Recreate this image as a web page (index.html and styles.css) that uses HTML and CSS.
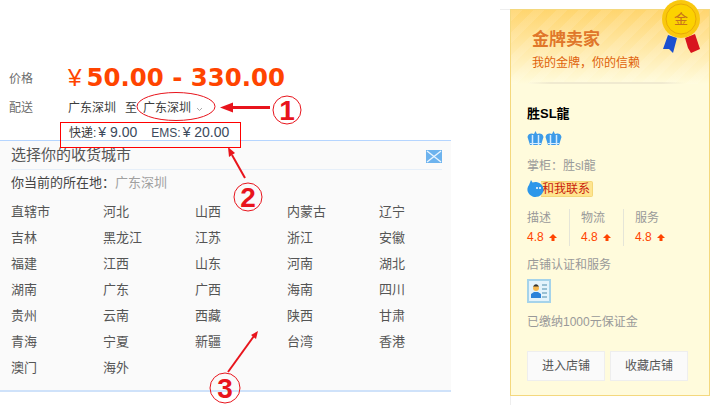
FILE: index.html
```html
<!DOCTYPE html>
<html lang="zh-CN">
<head>
    <meta charset="UTF-8">
    <title>选择你的收货城市</title>
    <link rel="stylesheet" href="styles.css">
</head>
<body>
    <div class="page">
        <div class="main">
            <div class="row price-row">
                <div class="label">价格</div>
                <div class="price"><span class="yen">¥</span>50.00 - 330.00</div>
            </div>
            <div class="row ship-row">
                <div class="label">配送</div>
                <div class="ship-to">广东深圳<span class="to">至</span>广东深圳<svg class="caret" width="7" height="5" viewBox="0 0 7 5"><path d="M1 1l2.500 2.500L6 1" fill="none" stroke="#aaa"/></svg></div>
            </div>
            <div class="fee">快递:<span class="fee-num">¥ 9.00</span><span class="fee-ems">EMS:</span><span class="fee-num">¥ 20.00</span></div>

            <div class="city-box">
                <div class="city-head">
                    <span>选择你的收货城市</span>
                    <svg class="close" width="16" height="13" viewBox="0 0 16 13"><rect width="16" height="13" fill="#6db3ee"/><path d="M1 1l14 11M15 1L1 12" stroke="#e8f4ff" stroke-width="1.400"/></svg>
                </div>
                <div class="city-now">你当前的所在地：<span>广东深圳</span></div>
                <div class="city-grid">
                    <a>直辖市</a><a>河北</a><a>山西</a><a>内蒙古</a><a>辽宁</a>
                    <a>吉林</a><a>黑龙江</a><a>江苏</a><a>浙江</a><a>安徽</a>
                    <a>福建</a><a>江西</a><a>山东</a><a>河南</a><a>湖北</a>
                    <a>湖南</a><a>广东</a><a>广西</a><a>海南</a><a>四川</a>
                    <a>贵州</a><a>云南</a><a>西藏</a><a>陕西</a><a>甘肃</a>
                    <a>青海</a><a>宁夏</a><a>新疆</a><a>台湾</a><a>香港</a>
                    <a>澳门</a><a>海外</a>
                </div>
            </div>
        </div>

        <div class="side-col">
            <div class="side">
                <div class="gold">
                    <div class="gold-title">金牌卖家</div>
                    <div class="gold-sub">我的金牌，你的信赖</div>
                    <div class="gold-line"></div>
                </div>
                <div class="shop">
                    <div class="shop-name">胜SL龍</div>
                    <div class="crowns">
                        <svg width="17" height="15" viewBox="0 0 17 15"><path d="M8.500 0l1.500 3c2-1 6-1 6.500 3L14 14H3L.5 6C1 2 5 2 7 3z" fill="#3d9be8"/><path d="M5.500 4v10M11.500 4v10" stroke="#d5ecff" stroke-width="1.500"/><path d="M3 12.500h11" stroke="#d5ecff"/></svg>
                        <svg width="17" height="15" viewBox="0 0 17 15"><path d="M8.500 0l1.500 3c2-1 6-1 6.500 3L14 14H3L.5 6C1 2 5 2 7 3z" fill="#3d9be8"/><path d="M5.500 4v10M11.500 4v10" stroke="#d5ecff" stroke-width="1.500"/><path d="M3 12.500h11" stroke="#d5ecff"/></svg>
                    </div>
                    <div class="keeper">掌柜：胜sl龍</div>
                    <div class="contact">
                        <svg class="wang" width="17" height="17" viewBox="0 0 17 17"><path d="M4 0l1.500 2.500A8 7.500 0 1 1 2 5z" fill="#2d97ea"/><circle cx="10" cy="8" r="1" fill="#fff"/><circle cx="13" cy="8" r="1" fill="#fff"/></svg>
                        <span>和我联系</span>
                    </div>
                    <div class="rates">
                        <div class="rate">描述<b>4.8<svg class="up" width="8" height="7" viewBox="0 0 8 7"><path d="M4 0l4 4H5.500v3h-3V4H0z" fill="#ff4400"/></svg></b></div>
                        <div class="rate">物流<b>4.8<svg class="up" width="8" height="7" viewBox="0 0 8 7"><path d="M4 0l4 4H5.500v3h-3V4H0z" fill="#ff4400"/></svg></b></div>
                        <div class="rate">服务<b>4.8<svg class="up" width="8" height="7" viewBox="0 0 8 7"><path d="M4 0l4 4H5.500v3h-3V4H0z" fill="#ff4400"/></svg></b></div>
                    </div>
                    <div class="cert">店铺认证和服务</div>
                    <svg class="cert-icon" width="24" height="24" viewBox="0 0 24 24">
                        <rect x="1" y="1" width="22" height="22" fill="#e4f3fb" stroke="#a5d3ea" stroke-width="2"/>
                        <circle cx="9" cy="9" r="3" fill="#f5b74e"/>
                        <path d="M6 7.500Q9 3 12 7.500z" fill="#333"/>
                        <path d="M4 19v-4l3-2h4l3 2v4z" fill="#2b82d9"/>
                        <path d="M15 6h5M15 10h5M15 14h5M15 18h5" stroke="#7fb0c8" stroke-width="1.500"/>
                    </svg>
                    <div class="deposit">已缴纳1000元保证金</div>
                    <div class="shop-btns">
                        <a class="shop-btn">进入店铺</a>
                        <a class="shop-btn">收藏店铺</a>
                    </div>
                </div>
            </div>
            <div class="side-foot"></div>
        </div>
    </div>

    <!-- 奖牌 -->
    <svg class="medal" width="40" height="54" viewBox="0 0 40 54">
        <path d="M2 49L7 35l9 3-4 15-4-4z" fill="#1a4fd0"/>
        <path d="M24 38l10-4 5 15-9 4-3-5z" fill="#d8141e"/>
        <circle cx="20" cy="19" r="19" fill="#f9c80e"/>
        <circle cx="20" cy="19" r="15" fill="#fcd200" stroke="#e8a908"/>
        <text x="20" y="24" text-anchor="middle" class="medal-text">金</text>
    </svg>

    <!-- 标注 -->
    <svg class="notes" width="712" height="405" viewBox="0 0 712 405">
        <g fill="none" stroke="#e8141c">
            <ellipse cx="176" cy="106.500" rx="39" ry="14"/>
            <circle cx="287" cy="110" r="14"/>
            <circle cx="248" cy="197" r="14"/>
            <circle cx="225" cy="388" r="15"/>
            <rect x="60.500" y="122.500" width="180" height="25" stroke="#f00"/>
            <path d="M270 107.500H232" stroke-width="3"/>
            <path d="M245 178L232 155" stroke-width="2"/>
            <path d="M228 372L254 336" stroke-width="2"/>
        </g>
        <g fill="#e8141c">
            <path d="M220 107.500l13-5v10z"/>
            <path d="M228 147l7 6-6 4z"/>
            <path d="M258 331l-2 8-5-4z"/>
        </g>
        <text x="287" y="120" class="note-num">1</text>
        <text x="248" y="207" class="note-num">2</text>
        <text x="225" y="398" class="note-num">3</text>
    </svg>
</body>
</html>
```

FILE: styles.css
```css
body {
    margin: 0;
    width: 712px;
    height: 405px;
    overflow: hidden;
    position: relative;
    background: #fff;
    font-family: "Liberation Sans", "Noto Sans CJK SC", sans-serif;
    font-size: 13px;
    color: #3c3c3c;
}

.page {
    display: flex;
    align-items: flex-start;
    gap: 59px;
}

.main {
    width: 451px;
    flex: none;
    padding-top: 63px;
}

.row {
    display: flex;
    align-items: center;
    padding-left: 9px;
    font-size: 12px;
}

.label {
    width: 59px;
    color: #6c6c6c;
}

.price-row {
    height: 29px;
}

.price {
    font-family: "DejaVu Sans", sans-serif;
    font-weight: bold;
    font-size: 24.4px;
    color: #ff4400;
}

.yen {
    font-family: "Liberation Sans", sans-serif;
    font-weight: normal;
    margin-right: 5px;
}

.ship-row {
    height: 28px;
}

.to {
    margin: 0 6px 0 9px;
}

.caret {
    margin-left: 5px;
}

.fee {
    margin: 3px 0 -1px 69px;
    height: 18px;
    line-height: 18px;
    font-size: 12px;
    color: #3c3c3c;
}

.fee-num {
    color: #3c4a5c;
    font-size: 14px;
    margin-left: 2px;
}

.fee-ems {
    margin-left: 14px;
    color: #3c4a5c;
}

.city-box {
    height: 249px;
    background: #fafafa;
    border-top: 1px solid #b5d5ff;
    border-bottom: 2px solid #cfe2fa;
}

.city-head {
    margin: 0 9px 0 11px;
    height: 25px;
    padding-bottom: 3px;
    border-bottom: 1px solid #e6eff9;
    display: flex;
    justify-content: space-between;
    align-items: center;
    font-size: 15px;
    color: #555;
}

.close {
    margin-top: 5px;
}

.city-now {
    margin: 3px 0 0 11px;
    height: 20px;
    line-height: 20px;
    color: #444;
}

.city-now span {
    color: #a0a0a0;
}

.city-grid {
    display: grid;
    grid-template-columns: repeat(5, 92px);
    grid-auto-rows: 26px;
    margin: 6px 0 0 11px;
    line-height: 26px;
    color: #555;
}

.side-col {
    width: 200px;
    flex: none;
    margin-top: 9px;
}

.side {
    height: 387px;
    box-sizing: border-box;
    border: 1px solid #f4d87e;
    background: #fffbdc;
    font-size: 12px;
    position: relative;
}

.side::before {
    content: "";
    position: absolute;
    left: -11px;
    top: -1px;
    width: 10px;
    height: 1px;
    background: #eee;
}

.side-foot {
    height: 9px;
    border-left: 1px solid #eee;
}

.gold {
    height: 74px;
    padding: 19px 0 0 21px;
    box-sizing: border-box;
    position: relative;
    background:
        repeating-linear-gradient(135deg, rgba(255, 255, 255, 0.1) 0 8px, transparent 8px 16px),
        linear-gradient(#ffd56f, #fffbdc);
}

.gold-line {
    position: absolute;
    left: 16px;
    right: 24px;
    bottom: 0;
    height: 2px;
    background: linear-gradient(90deg, transparent, #f0ead0 15%, #f0ead0 85%, transparent);
}

.gold-title {
    font-size: 17px;
    font-weight: bold;
    line-height: 22px;
    color: #e0762a;
}

.gold-sub {
    line-height: 18px;
    margin-top: 3px;
    color: #e0620a;
}

.shop {
    padding: 0 0 0 16px;
}

.shop-name {
    margin-top: 21px;
    font-size: 13px;
    font-weight: bold;
    line-height: 18px;
    color: #000;
}

.crowns {
    display: flex;
    gap: 1px;
    margin-top: 8px;
    height: 15px;
}

.keeper {
    margin-top: 10px;
    line-height: 20px;
    color: #999;
}

.contact {
    display: flex;
    align-items: center;
    margin-top: 4px;
    height: 17px;
}

.contact span {
    line-height: 14px;
    padding: 0 2px 0 1px;
    color: #c8200c;
    background: #ffe58f;
    border: 1px solid #f5d778;
    border-left: 0;
    margin-left: -3px;
    border-radius: 0 2px 2px 0;
}

.wang {
    position: relative;
    z-index: 1;
}

.rates {
    display: flex;
    margin-top: 12px;
}

.rate {
    width: 42px;
    margin-right: 11px;
    border-right: 1px solid #e5e5d8;
    line-height: 18px;
    color: #999;
}

.rate:last-child {
    border-right: 0;
}

.rate b {
    display: block;
    font-weight: normal;
    color: #ff4400;
    margin-top: 1px;
}

.up {
    margin-left: 5px;
}

.cert {
    margin-top: 9px;
    line-height: 20px;
    color: #999;
}

.cert-icon {
    display: block;
    margin-top: 4px;
}

.deposit {
    margin-top: 9px;
    line-height: 20px;
    color: #999;
}

.shop-btns {
    display: flex;
    gap: 5px;
    margin-top: 19px;
}

.shop-btn {
    width: 78px;
    height: 30px;
    box-sizing: border-box;
    line-height: 28px;
    text-align: center;
    color: #555;
    background: #fafafa;
    border: 1px solid #eee;
}

.medal {
    position: absolute;
    left: 661px;
    top: 0;
}

.medal-text {
    font-size: 14px;
    fill: #c8741a;
}

.notes {
    position: absolute;
    left: 0;
    top: 0;
    pointer-events: none;
}

.note-num {
    font-family: "Liberation Sans", sans-serif;
    font-size: 28px;
    font-weight: bold;
    fill: #e8141c;
    text-anchor: middle;
}
```
